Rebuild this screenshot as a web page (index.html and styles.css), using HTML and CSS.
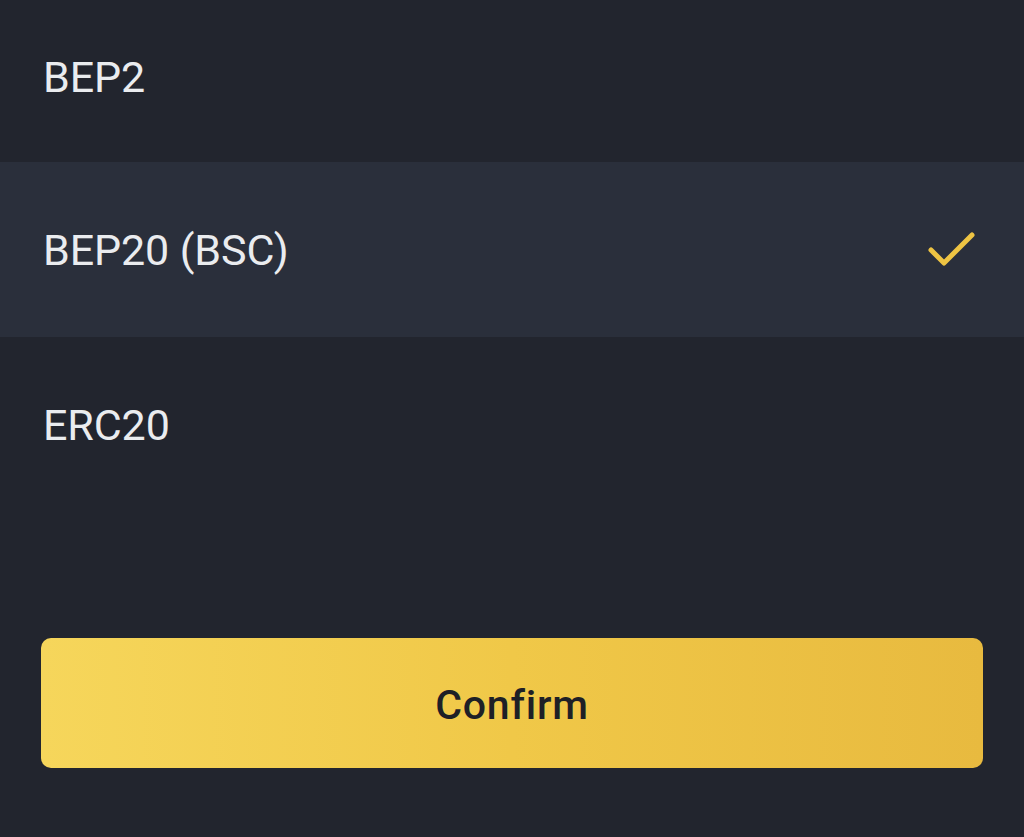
FILE: index.html
```html
<!DOCTYPE html>
<html>
<head>
<meta charset="utf-8">
<link rel="stylesheet" href="styles.css">
</head>
<body>
<div class="sheet">
  <div class="list">
    <div class="row row-first"><span class="label">BEP2</span></div>
    <div class="row row-selected"><span class="label">BEP20 (BSC)</span>
      <svg class="check" width="50" height="40" viewBox="0 0 50 40"><path d="M4 20 L17 33 L45 5" fill="none" stroke="#eec443" stroke-width="5" stroke-linecap="round" stroke-linejoin="round"/></svg>
    </div>
    <div class="row"><span class="label">ERC20</span></div>
  </div>
  <div class="footer">
    <button class="confirm">Confirm</button>
  </div>
</div>
</body>
</html>
```
FILE: styles.css
```css
html, body {
  margin: 0;
  padding: 0;
  background: #22252e;
  height: 837px;
  overflow: hidden;
}
.sheet {
  font-family: Roboto, "Liberation Sans", sans-serif;
  color: #eaecef;
}
.list {
  display: flex;
  flex-direction: column;
}
.row {
  height: 175px;
  display: flex;
  align-items: center;
  justify-content: space-between;
  padding: 0 47px 0 43px;
  box-sizing: border-box;
}
.row-first {
  height: 162px;
}
.row-first .label {
  margin-top: -8px;
}
.row-selected {
  background: #2a2f3b;
}
.label {
  font-size: 43px;
  letter-spacing: -0.1px;
}
.check {
  display: block;
}
.footer {
  padding: 126px 41px 0 41px;
}
.confirm {
  width: 100%;
  height: 130px;
  border: none;
  border-radius: 10px;
  background: linear-gradient(90deg, #f6d65b 0%, #f0c848 50%, #e8ba3f 100%);
  font-family: Roboto, "Liberation Sans", sans-serif;
  font-weight: 500;
  font-size: 41px;
  letter-spacing: 0.8px;
  color: #1e2026;
  padding: 4px 0 0 0;
}
```
